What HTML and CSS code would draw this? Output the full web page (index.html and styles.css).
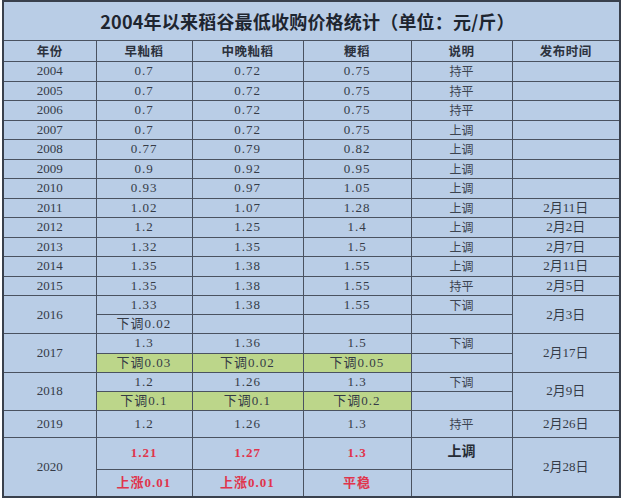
FILE: index.html
```html
<!DOCTYPE html>
<html lang="zh">
<head>
<meta charset="utf-8">
<title>2004年以来稻谷最低收购价格统计</title>
<link rel="stylesheet" href="styles.css">
</head>
<body>
<table class="sheet">
  <colgroup>
    <col class="c-year"><col class="c-early"><col class="c-mid"><col class="c-jap"><col class="c-note"><col class="c-date">
  </colgroup>
  <tr class="r-title"><td colspan="6" class="title">2004年以来稻谷最低收购价格统计（单位：元/斤）</td></tr>
  <tr class="r-head">
    <th>年份</th><th>早籼稻</th><th>中晚籼稻</th><th>粳稻</th><th>说明</th><th>发布时间</th>
  </tr>
  <tr class="r"><td class="yr">2004</td><td class="v">0.7</td><td class="v">0.72</td><td class="v">0.75</td><td class="n">持平</td><td></td></tr>
  <tr class="r"><td class="yr">2005</td><td class="v">0.7</td><td class="v">0.72</td><td class="v">0.75</td><td class="n">持平</td><td></td></tr>
  <tr class="r"><td class="yr">2006</td><td class="v">0.7</td><td class="v">0.72</td><td class="v">0.75</td><td class="n">持平</td><td></td></tr>
  <tr class="r"><td class="yr">2007</td><td class="v">0.7</td><td class="v">0.72</td><td class="v">0.75</td><td class="n">上调</td><td></td></tr>
  <tr class="r"><td class="yr">2008</td><td class="v">0.77</td><td class="v">0.79</td><td class="v">0.82</td><td class="n">上调</td><td></td></tr>
  <tr class="r"><td class="yr">2009</td><td class="v">0.9</td><td class="v">0.92</td><td class="v">0.95</td><td class="n">上调</td><td></td></tr>
  <tr class="r"><td class="yr">2010</td><td class="v">0.93</td><td class="v">0.97</td><td class="v">1.05</td><td class="n">上调</td><td></td></tr>
  <tr class="r"><td class="yr">2011</td><td class="v">1.02</td><td class="v">1.07</td><td class="v">1.28</td><td class="n">上调</td><td class="d">2月11日</td></tr>
  <tr class="r"><td class="yr">2012</td><td class="v">1.2</td><td class="v">1.25</td><td class="v">1.4</td><td class="n">上调</td><td class="d">2月2日</td></tr>
  <tr class="r"><td class="yr">2013</td><td class="v">1.32</td><td class="v">1.35</td><td class="v">1.5</td><td class="n">上调</td><td class="d">2月7日</td></tr>
  <tr class="r"><td class="yr">2014</td><td class="v">1.35</td><td class="v">1.38</td><td class="v">1.55</td><td class="n">上调</td><td class="d">2月11日</td></tr>
  <tr class="r"><td class="yr">2015</td><td class="v">1.35</td><td class="v">1.38</td><td class="v">1.55</td><td class="n">持平</td><td class="d">2月5日</td></tr>

  <tr class="s"><td class="yr" rowspan="2">2016</td><td class="v">1.33</td><td class="v">1.38</td><td class="v">1.55</td><td class="n">下调</td><td class="d" rowspan="2">2月3日</td></tr>
  <tr class="s"><td class="v">下调0.02</td><td></td><td></td><td></td></tr>

  <tr class="s"><td class="yr" rowspan="2">2017</td><td class="v">1.3</td><td class="v">1.36</td><td class="v">1.5</td><td class="n">下调</td><td class="d" rowspan="2">2月17日</td></tr>
  <tr class="s"><td class="v g">下调0.03</td><td class="v g">下调0.02</td><td class="v g">下调0.05</td><td></td></tr>

  <tr class="s"><td class="yr" rowspan="2">2018</td><td class="v">1.2</td><td class="v">1.26</td><td class="v">1.3</td><td class="n">下调</td><td class="d" rowspan="2">2月9日</td></tr>
  <tr class="s"><td class="v g">下调0.1</td><td class="v g">下调0.1</td><td class="v g">下调0.2</td><td></td></tr>

  <tr class="r-19"><td class="yr">2019</td><td class="v">1.2</td><td class="v">1.26</td><td class="v">1.3</td><td class="n">持平</td><td class="d">2月26日</td></tr>

  <tr class="r-20"><td class="yr" rowspan="2">2020</td><td class="v red">1.21</td><td class="v red">1.27</td><td class="v red">1.3</td><td class="n up">上调</td><td class="d" rowspan="2">2月28日</td></tr>
  <tr class="r-20"><td class="v red">上涨0.01</td><td class="v red">上涨0.01</td><td class="v red">平稳</td><td></td></tr>
</table>
</body>
</html>
```
FILE: styles.css
```css
html, body {
  margin: 0;
  padding: 0;
  background: #ffffff;
}

.sheet {
  margin-left: 2px;
  border-collapse: collapse;
  table-layout: fixed;
  width: 617px;
  background: #b9cde6;
  border: 2px solid #39404c;
  color: #353b47;
  font-family: "Liberation Serif", "Noto Sans CJK SC", serif;
  font-size: 13px;
}

.c-year { width: 93px; }
.c-early { width: 96px; }
.c-mid { width: 111px; }
.c-jap { width: 108px; }
.c-note { width: 101px; }
.c-date { width: 108px; }

.sheet td, .sheet th {
  border: 1px solid #4a5260;
  padding: 0;
  text-align: center;
  vertical-align: middle;
  line-height: 14px;
  overflow: hidden;
  white-space: nowrap;
}

.r-title td { height: 38px; }
.title {
  font-family: "Noto Sans CJK SC", sans-serif;
  font-weight: 700;
  font-size: 18px;
  color: #1e2530;
  padding-right: 8px !important;
  letter-spacing: 0.2px;
}

.r-head th {
  height: 20px;
  font-family: "Noto Sans CJK SC", serif;
  font-weight: 700;
  font-size: 12.5px;
  color: #2c323d;
  letter-spacing: 0.5px;
}

.r td { height: 18.5px; }
.s td { height: 18.2px; }
.r-19 td { height: 25.5px; }
.r-20 td { height: 26px; }

.yr { letter-spacing: 0; }

.v {
  letter-spacing: 1px;
  font-family: "Liberation Serif", "Noto Sans CJK SC", serif;
}

.n {
  font-family: "Noto Sans CJK SC", sans-serif;
  font-size: 12px;
  color: #3c4350;
}

.d {
  font-family: "Liberation Serif", "Noto Sans CJK SC", serif;
  font-size: 13px;
}

.g { background: #bcd68a; }

.red {
  color: #e0344c;
  font-weight: 700;
}

.up {
  font-weight: 700;
  font-size: 14px;
  color: #252b35;
  vertical-align: top !important;
  padding-top: 5px !important;
}
```
